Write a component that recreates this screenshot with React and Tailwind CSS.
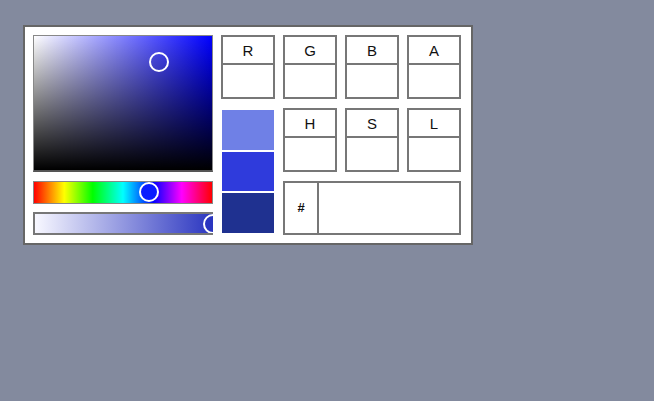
import React from "react";

const HUE =
  "linear-gradient(to right, #ff0000 0%, #ffff00 17%, #00ff00 33%, #00ffff 50%, #0000ff 67%, #ff00ff 83%, #ff0000 100%)";

const Field = ({ label }) => (
  <div className="flex h-[64px] w-[54px] flex-col border-2 border-[#777] bg-white">
    <div className="flex h-[28px] items-center justify-center border-b-2 border-[#777] text-[15px] leading-none text-[#111]">
      {label}
    </div>
    <div className="flex-1" />
  </div>
);

export default function App() {
  return (
    <div
      className="min-h-[401px] w-full bg-[#838a9e] pl-[23px] pt-[25px]"
      style={{ fontFamily: '"Liberation Sans", Arial, sans-serif' }}
    >
      <div className="flex h-[220px] w-[450px] gap-2 border-2 border-[#666] bg-white p-2">
        {/* ── Left: picker area ───────────────────────── */}
        <div className="flex w-[180px] flex-col">
          <div
            className="relative h-[137px] w-full border border-b-2 border-[#888] border-b-[#555]"
            style={{
              background:
                "linear-gradient(to top, #000, rgba(0,0,0,0)), linear-gradient(to right, #fff, #0000ff)",
            }}
          >
            <div className="absolute left-[115px] top-[16px] h-[20px] w-[20px] rounded-full border-2 border-white" />
          </div>

          <div
            className="relative mt-[9px] h-[23px] w-full border border-[#888]"
            style={{ background: HUE }}
          >
            <div className="absolute left-[105px] top-[0px] h-[20px] w-[20px] rounded-full border-2 border-white bg-[#0a1cff]" />
          </div>

          <div className="relative mt-[8px] h-[23px] w-full overflow-hidden border-2 border-r-0 border-[#777] bg-[linear-gradient(to_right,#f8f8ff,#2a35c0)]">
            <div className="absolute -right-[10px] top-[0px] h-[20px] w-[20px] rounded-full border-2 border-white bg-[#2a35c0]" />
          </div>
        </div>

        {/* ── Right: fields ───────────────────────────── */}
        <div className="flex w-[240px] flex-col gap-[9px]">
          <div className="flex gap-2">
            <Field label="R" />
            <Field label="G" />
            <Field label="B" />
            <Field label="A" />
          </div>

          <div className="flex gap-2">
            <div className="flex h-[127px] w-[54px] flex-col gap-[2px] px-[1px] py-[2px]">
              <div className="h-[40px] bg-[#6f80e6]" />
              <div className="h-[40px] bg-[#2f3bdc]" />
              <div className="h-[40px] bg-[#1f3190]" />
            </div>
            <div className="flex flex-col gap-[9px]">
              <div className="flex gap-2">
                <Field label="H" />
                <Field label="S" />
                <Field label="L" />
              </div>
              <div className="flex h-[54px] w-[178px] border-2 border-[#777] bg-white">
                <div className="flex w-[34px] items-center justify-center border-r-2 border-[#777] text-[13px] font-bold text-[#111]">
                  #
                </div>
                <div className="flex-1" />
              </div>
            </div>
          </div>
        </div>
      </div>
    </div>
  );
}
